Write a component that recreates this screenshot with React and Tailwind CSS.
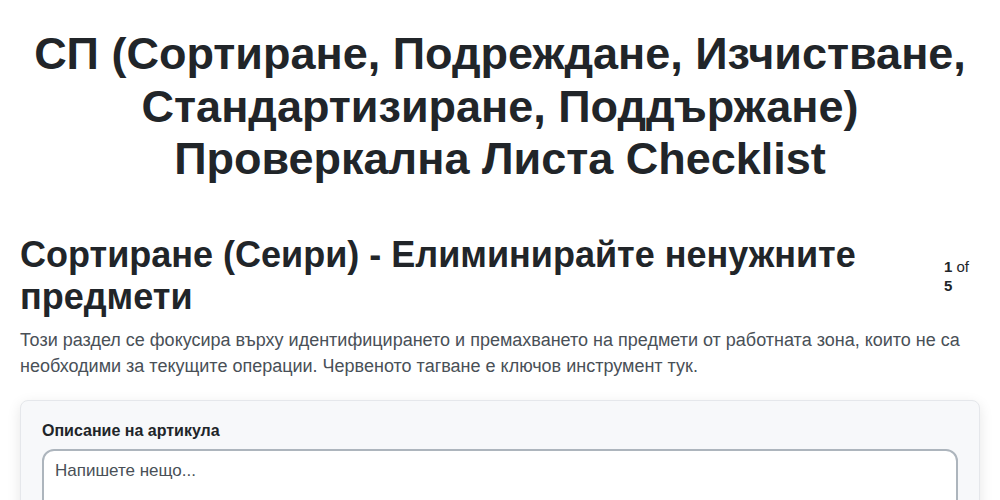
export default function App() {
  return (
    <div
      className="min-h-screen bg-white px-5 pt-[28px] pb-10 text-[#212529]"
      style={{ fontFamily: '"Liberation Sans", Arial, sans-serif' }}
    >
      {/* TITLE */}
      <h1 className="text-center text-[45px] font-bold leading-[52.5px]">
        СП (Сортиране, Подреждане, Изчистване, Стандартизиране, Поддържане)
        <br />
        Проверкална Листа Checklist
      </h1>

      {/* SECTION HEADER */}
      <div className="mt-[48px] flex items-center justify-between gap-6">
        <h2 className="text-[36px] font-bold leading-[42px]">
          Сортиране (Сеири) - Елиминирайте ненужните предмети
        </h2>
        <div className="w-[36px] shrink-0 text-[15px] leading-[19px]">
          <span className="font-bold">1</span> of <span className="font-bold">5</span>
        </div>
      </div>

      <p className="mt-[9px] text-[18px] leading-[26px] text-[#495057]">
        Този раздел се фокусира върху идентифицирането и премахването на предмети от работната зона, които не са
        необходими за текущите операции. Червеното тагване е ключов инструмент тук.
      </p>

      {/* ITEM CARD */}
      <div className="mt-[21px] rounded-lg border border-[#e5e7eb] bg-[#f7f8fa] px-[21px] pt-[20px] pb-6 shadow-[0_4px_14px_rgba(0,0,0,0.1)]">
        <label className="block text-[16px] font-bold leading-5">Описание на артикула</label>
        <textarea
          rows={4}
          placeholder="Напишете нещо..."
          className="mt-2 block w-full resize-none rounded-xl border-2 border-[#adb5bd] bg-white px-[11px] py-[8px] text-[17px] leading-6 text-[#212529] outline-none placeholder:text-[#495057]"
        />
      </div>
    </div>
  );
}
